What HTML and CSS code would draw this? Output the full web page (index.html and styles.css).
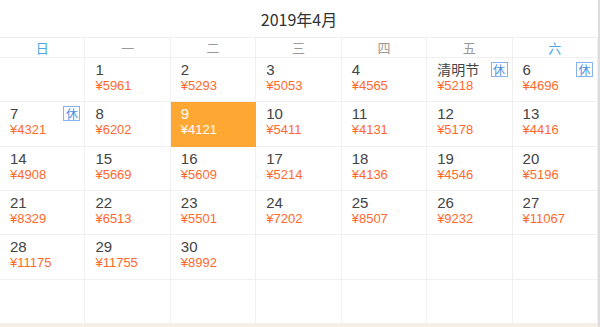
FILE: index.html
```html
<!DOCTYPE html>
<html lang="zh-CN">
<head>
<meta charset="utf-8">
<title>2019年4月</title>
<link rel="stylesheet" href="styles.css">
</head>
<body>
<div class="frame">
  <div class="main">
    <div class="title">2019年4月</div>
    <div class="grid">
      <div class="wk weekend">日</div>
      <div class="wk">一</div>
      <div class="wk">二</div>
      <div class="wk">三</div>
      <div class="wk">四</div>
      <div class="wk">五</div>
      <div class="wk weekend">六</div>

      <div class="cell"></div>
      <div class="cell"><span class="num">1</span><span class="price">¥5961</span></div>
      <div class="cell"><span class="num">2</span><span class="price">¥5293</span></div>
      <div class="cell"><span class="num">3</span><span class="price">¥5053</span></div>
      <div class="cell"><span class="num">4</span><span class="price">¥4565</span></div>
      <div class="cell"><span class="num holiday">清明节</span><span class="price">¥5218</span><span class="rest">休</span></div>
      <div class="cell"><span class="num">6</span><span class="price">¥4696</span><span class="rest">休</span></div>

      <div class="cell"><span class="num">7</span><span class="price">¥4321</span><span class="rest">休</span></div>
      <div class="cell"><span class="num">8</span><span class="price">¥6202</span></div>
      <div class="cell selected"><span class="num">9</span><span class="price">¥4121</span></div>
      <div class="cell"><span class="num">10</span><span class="price">¥5411</span></div>
      <div class="cell"><span class="num">11</span><span class="price">¥4131</span></div>
      <div class="cell"><span class="num">12</span><span class="price">¥5178</span></div>
      <div class="cell"><span class="num">13</span><span class="price">¥4416</span></div>

      <div class="cell"><span class="num">14</span><span class="price">¥4908</span></div>
      <div class="cell"><span class="num">15</span><span class="price">¥5669</span></div>
      <div class="cell"><span class="num">16</span><span class="price">¥5609</span></div>
      <div class="cell"><span class="num">17</span><span class="price">¥5214</span></div>
      <div class="cell"><span class="num">18</span><span class="price">¥4136</span></div>
      <div class="cell"><span class="num">19</span><span class="price">¥4546</span></div>
      <div class="cell"><span class="num">20</span><span class="price">¥5196</span></div>

      <div class="cell"><span class="num">21</span><span class="price">¥8329</span></div>
      <div class="cell"><span class="num">22</span><span class="price">¥6513</span></div>
      <div class="cell"><span class="num">23</span><span class="price">¥5501</span></div>
      <div class="cell"><span class="num">24</span><span class="price">¥7202</span></div>
      <div class="cell"><span class="num">25</span><span class="price">¥8507</span></div>
      <div class="cell"><span class="num">26</span><span class="price">¥9232</span></div>
      <div class="cell"><span class="num">27</span><span class="price">¥11067</span></div>

      <div class="cell"><span class="num">28</span><span class="price">¥11175</span></div>
      <div class="cell"><span class="num">29</span><span class="price">¥11755</span></div>
      <div class="cell"><span class="num">30</span><span class="price">¥8992</span></div>
      <div class="cell"></div>
      <div class="cell"></div>
      <div class="cell"></div>
      <div class="cell"></div>

      <div class="cell"></div>
      <div class="cell"></div>
      <div class="cell"></div>
      <div class="cell"></div>
      <div class="cell"></div>
      <div class="cell"></div>
      <div class="cell"></div>
    </div>
    <div class="band"></div>
  </div>
  <div class="bar"></div>
</div>
</body>
</html>
```

FILE: styles.css
```css
* { box-sizing: border-box; }
html, body { margin: 0; padding: 0; background: #fff; }
body {
  font-family: "Noto Sans CJK SC", "Noto Sans", sans-serif;
  color: #333;
}
.frame {
  display: flex;
  width: 600px;
  height: 327px;
}
.main {
  width: 598px;
  display: flex;
  flex-direction: column;
}
.bar {
  width: 2px;
  background: #dcdcdc;
}
.title {
  height: 38px;
  border-bottom: 1px solid #efefef;
  font-size: 16px;
  line-height: 38px;
  text-align: center;
  color: #333;
}
.grid {
  display: grid;
  grid-template-columns: repeat(7, 1fr);
  grid-template-rows: 20px repeat(6, 1fr);
  height: 286px;
}
.wk {
  border-right: 1px solid #f0f0f0;
  border-bottom: 1px solid #f0f0f0;
  font-size: 13px;
  line-height: 19px;
  text-align: center;
  color: #999;
}
.wk.weekend { color: #4aa6e2; }
.cell {
  position: relative;
  border-right: 1px solid #f0f0f0;
  border-bottom: 1px solid #f0f0f0;
  padding: 3px 0 0 10px;
  display: flex;
  flex-direction: column;
  font-family: "Liberation Sans", "Noto Sans CJK SC", sans-serif;
}
.num {
  font-size: 15px;
  line-height: 17px;
  color: #444;
}
.num.holiday {
  font-family: "Noto Sans CJK SC", sans-serif;
  font-size: 14px;
  line-height: 16px;
  margin-bottom: 1px;
}
.price {
  font-size: 13px;
  line-height: 16px;
  color: #ff6a2c;
}
.selected {
  background: #ffa733;
  border-color: #ffa733;
}
.selected .num, .selected .price { color: #fff; }
.rest {
  position: absolute;
  top: 4px;
  right: 4px;
  width: 17px;
  height: 15px;
  border: 1px solid #86b3ef;
  color: #4a8fe6;
  font-family: "Noto Sans CJK SC", sans-serif;
  font-size: 12px;
  line-height: 13px;
  text-align: center;
}
.band {
  height: 3px;
  background: #f7eee5;
}
```
